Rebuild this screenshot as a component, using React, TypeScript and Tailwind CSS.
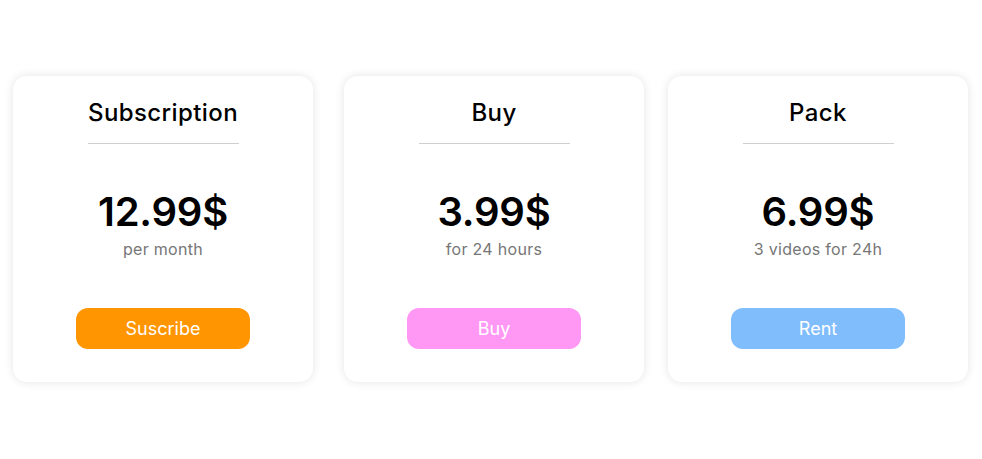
interface Plan {
  title: string;
  price: string;
  note: string;
  action: string;
  buttonClass: string;
  spacing: string;
}

const PLANS: Plan[] = [
  {
    title: 'Subscription',
    price: '12.99$',
    note: 'per month',
    action: 'Suscribe',
    buttonClass: 'bg-[#ff9500]',
    spacing: '',
  },
  {
    title: 'Buy',
    price: '3.99$',
    note: 'for 24 hours',
    action: 'Buy',
    buttonClass: 'bg-[#ff98f4]',
    spacing: 'ml-[31px]',
  },
  {
    title: 'Pack',
    price: '6.99$',
    note: '3 videos for 24h',
    action: 'Rent',
    buttonClass: 'bg-[#80bdfd]',
    spacing: 'ml-[24px]',
  },
];

function PlanCard({ plan }: { plan: Plan }) {
  return (
    <div
      className={`${plan.spacing} w-[300px] flex-shrink-0 flex flex-col items-center bg-white rounded-[14px] shadow-[0_0_10px_rgba(0,0,0,0.11)] pt-[21px] pb-[33px]`}
    >
      <h3 className="text-[24px] leading-[32px] font-medium tracking-[0.4px] text-black">{plan.title}</h3>
      <div className="w-[151px] h-px bg-[#cfcfcf] mt-[14px]" />
      <p className="mt-[44px] text-[40px] leading-[48px] font-semibold text-black tracking-[-0.2px]">
        {plan.price}
      </p>
      <p className="mt-px text-[16px] leading-[24px] tracking-[0.3px] text-[#767676]">{plan.note}</p>
      <button
        className={`${plan.buttonClass} mt-[47px] w-[174px] h-[41px] rounded-[12px] flex items-center justify-center text-white text-[18px]`}
      >
        {plan.action}
      </button>
    </div>
  );
}

export default function App() {
  return (
    <div
      className="w-[982px] h-[459px] bg-white pt-[76px] pl-[13px] flex items-start"
      style={{ fontFamily: 'Inter, "Noto Sans", sans-serif' }}
    >
      {PLANS.map((plan) => (
        <PlanCard key={plan.title} plan={plan} />
      ))}
    </div>
  );
}
